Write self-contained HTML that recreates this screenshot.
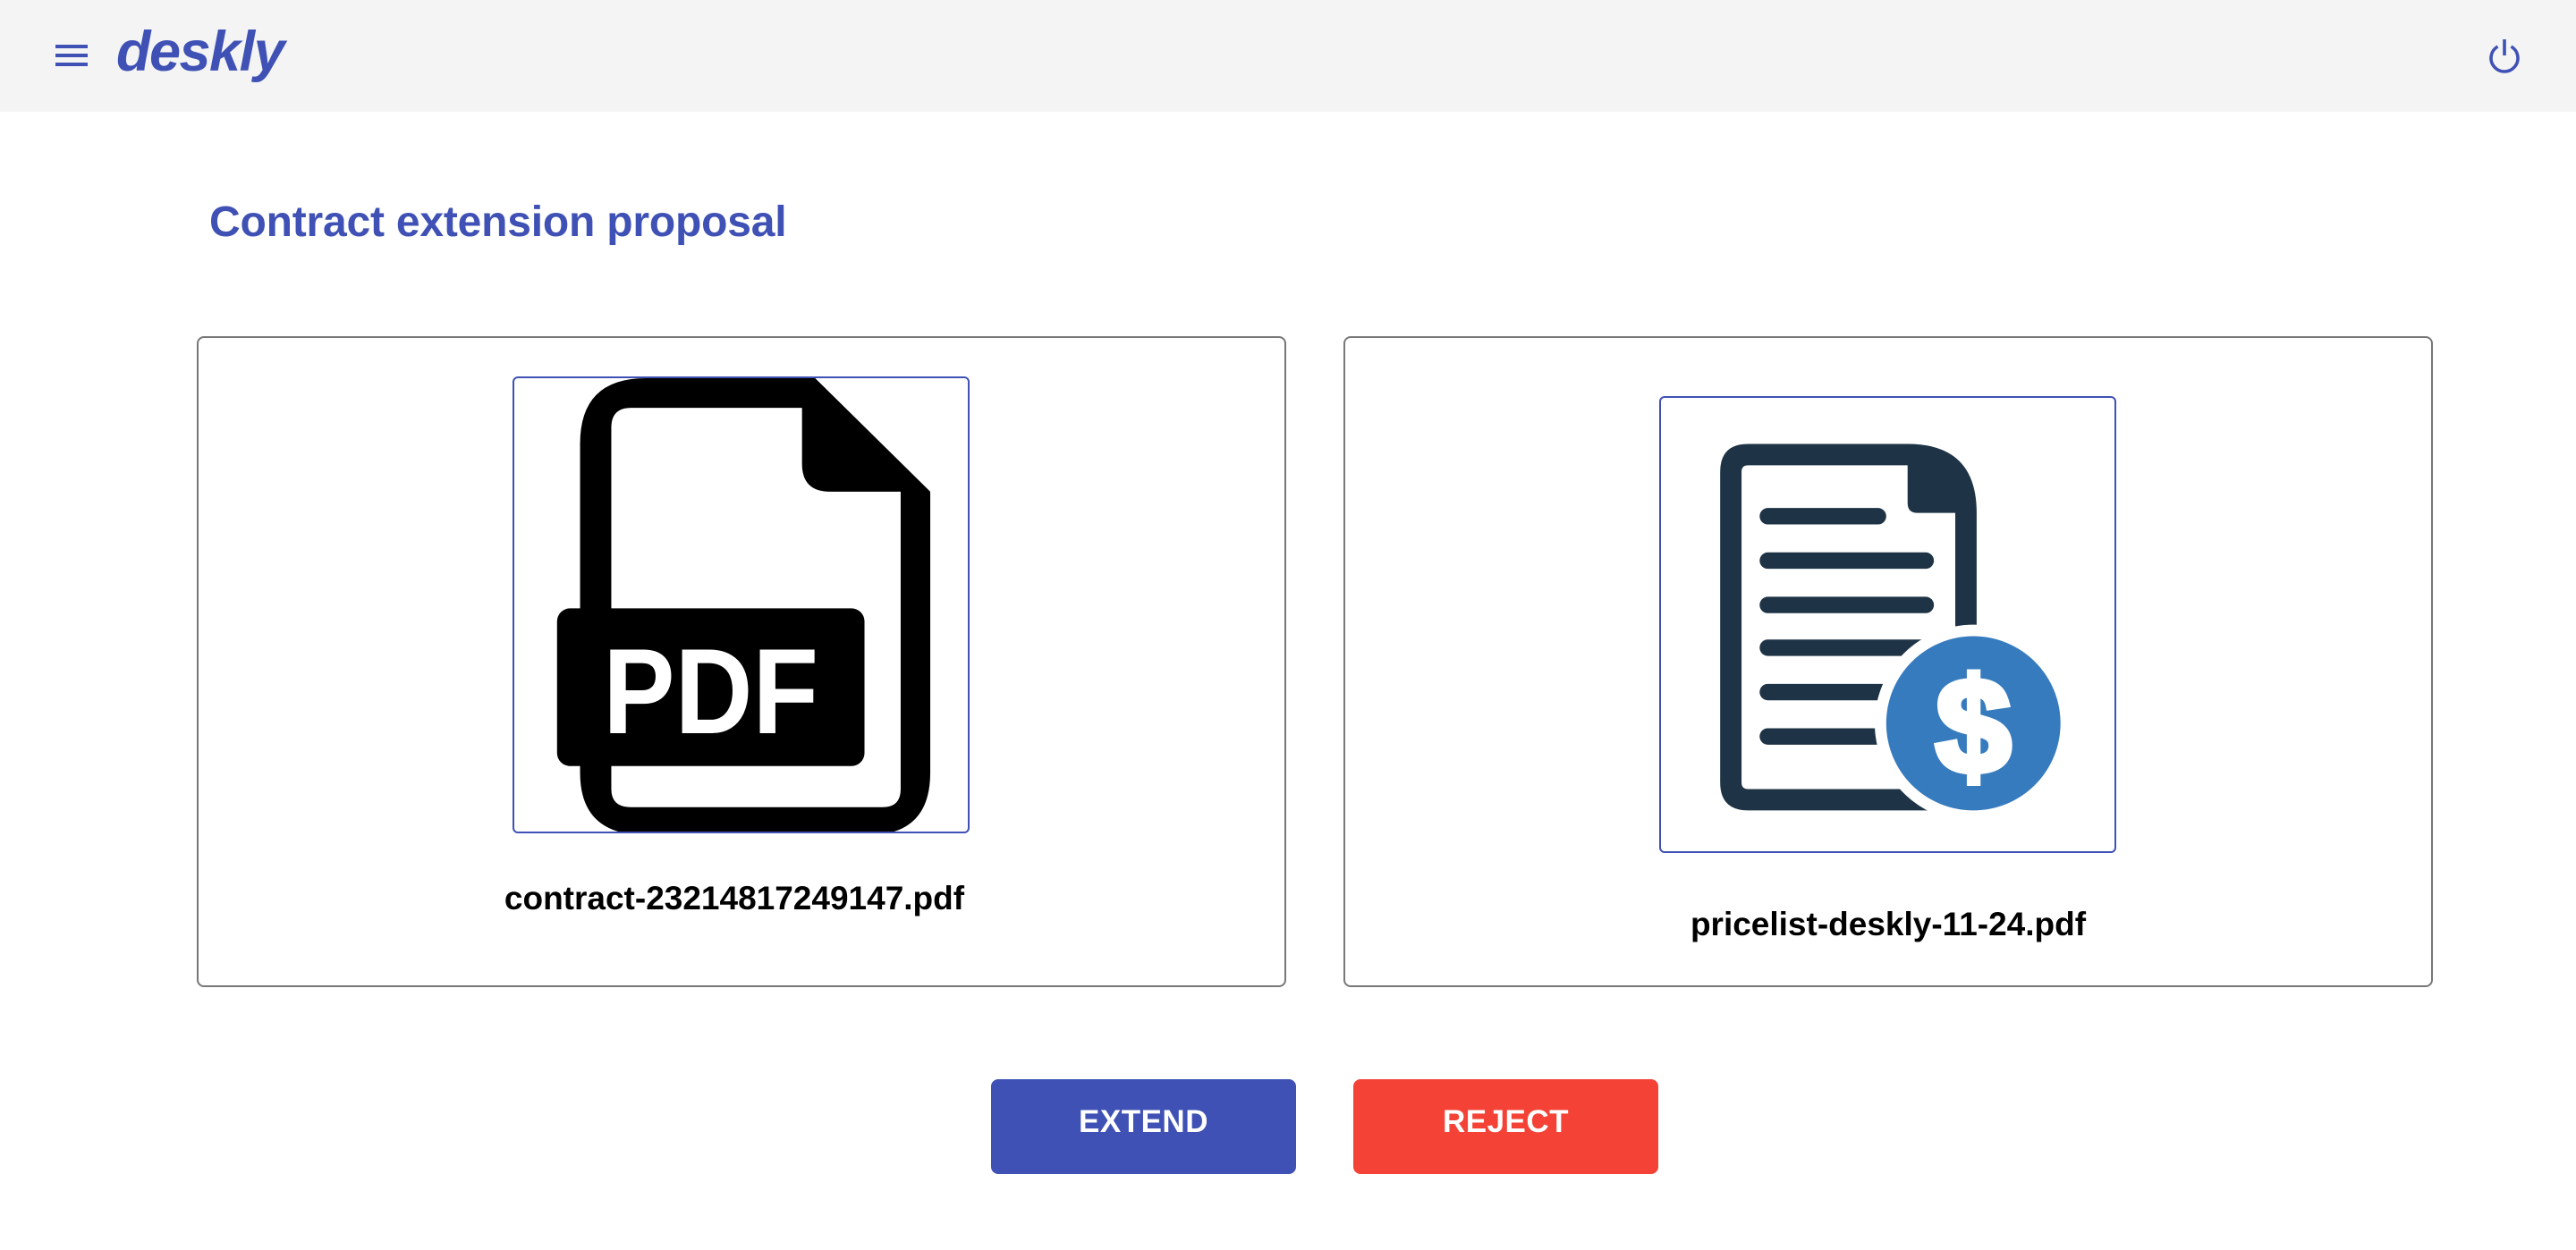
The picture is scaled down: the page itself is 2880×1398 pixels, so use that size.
<!DOCTYPE html>
<html><head><meta charset="utf-8"><style>
*{margin:0;padding:0;box-sizing:border-box}
body{width:2880px;height:1398px;background:#fff;font-family:"Liberation Sans",sans-serif;position:relative;overflow:hidden}
.hdr{position:absolute;left:0;top:0;width:2880px;height:125px;background:#f4f4f4}
.abs{position:absolute}
.logo{left:130px;top:22px;font-size:63px;font-weight:bold;font-style:italic;color:#3f51b5;letter-spacing:-1.5px}
.title{left:234px;top:221px;font-size:48px;font-weight:bold;color:#3f51b5;letter-spacing:-0.2px}
.card{position:absolute;top:376px;width:1218px;height:728px;border:2px solid #777;border-radius:8px}
.imgbox{position:absolute;width:511px;height:511px;border:2px solid #3f51b5;border-radius:6px;overflow:hidden}
.fn{position:absolute;width:100%;text-align:center;font-size:37px;font-weight:bold;color:#000;left:0}
.btn{position:absolute;top:1207px;width:341px;height:106px;border-radius:8px;color:#fff;font-size:35px;font-weight:bold;text-align:center;line-height:96px;letter-spacing:0.5px}
</style></head><body>
<div class="hdr"></div>
<svg class="abs" style="left:60px;top:48px" width="40" height="28" viewBox="0 0 40 28"><rect x="2" y="2" width="36" height="4" fill="#3f51b5"/><rect x="2" y="12" width="36" height="4" fill="#3f51b5"/><rect x="2" y="22" width="36" height="4" fill="#3f51b5"/></svg>
<div class="abs logo">deskly</div>
<svg class="abs" style="left:2780px;top:40px" width="40" height="42" viewBox="0 0 40 42"><path d="M12.5 12 A15 15 0 1 0 27.5 12" fill="none" stroke="#3f51b5" stroke-width="3.6"/><line x1="20" y1="4" x2="20" y2="22" stroke="#3f51b5" stroke-width="3.6"/></svg>
<div class="abs title">Contract extension proposal</div>

<div class="card" style="left:220px">
  <div class="imgbox" style="left:351px;top:43px">
    <svg width="511" height="511" viewBox="0 0 278 278">
      <path fill="#000" fill-rule="evenodd" d="M40,40 Q40,0 80,0 H183 L253,69 V240 Q253,278 215,278 H80 Q40,278 40,240 Z M59,30 Q59,18 71,18 H175 V52 Q175,69 192,69 H235 V250 Q235,261 224,261 H71 Q59,261 59,250 Z"/>
      <rect x="26" y="140" width="187" height="96" rx="8" fill="#000"/>
      <text x="54" y="216" textLength="131" lengthAdjust="spacingAndGlyphs" font-family="Liberation Sans, sans-serif" font-weight="bold" font-size="74" fill="#fff">PDF</text>
    </svg>
  </div>
  <div class="fn" style="top:606px;left:-8px">contract-23214817249147.pdf</div>
</div>

<div class="card" style="left:1502px">
  <div class="imgbox" style="left:351px;top:65px">
    <svg width="511" height="511" viewBox="0 0 278 278">
      <path fill="#1e3446" fill-rule="evenodd" d="M36,45 Q36,28 53,28 H150 Q192,28 192,70 V251 H53 Q36,251 36,234 Z M49,45 Q49,41 53,41 H150 V64 Q150,70 156,70 H179 V238 H53 Q49,238 49,234 Z"/>
      <g stroke="#1e3446" stroke-width="10" stroke-linecap="round">
        <line x1="65" y1="72" x2="132" y2="72"/>
        <line x1="65" y1="99" x2="161" y2="99"/>
        <line x1="65" y1="126" x2="161" y2="126"/>
        <line x1="65" y1="152" x2="161" y2="152"/>
        <line x1="65" y1="179" x2="161" y2="179"/>
        <line x1="65" y1="206" x2="161" y2="206"/>
      </g>
      <circle cx="190" cy="198" r="60" fill="#fff"/>
      <circle cx="190" cy="198" r="53" fill="#377bbf"/>
      <text x="190" y="228" text-anchor="middle" font-family="Liberation Sans, sans-serif" font-weight="bold" font-size="82" fill="#fff" stroke="#fff" stroke-width="4">$</text>
    </svg>
  </div>
  <div class="fn" style="top:635px">pricelist-deskly-11-24.pdf</div>
</div>

<div class="btn" style="left:1108px;background:#3f51b5">EXTEND</div>
<div class="btn" style="left:1513px;background:#f44336">REJECT</div>
</body></html>
